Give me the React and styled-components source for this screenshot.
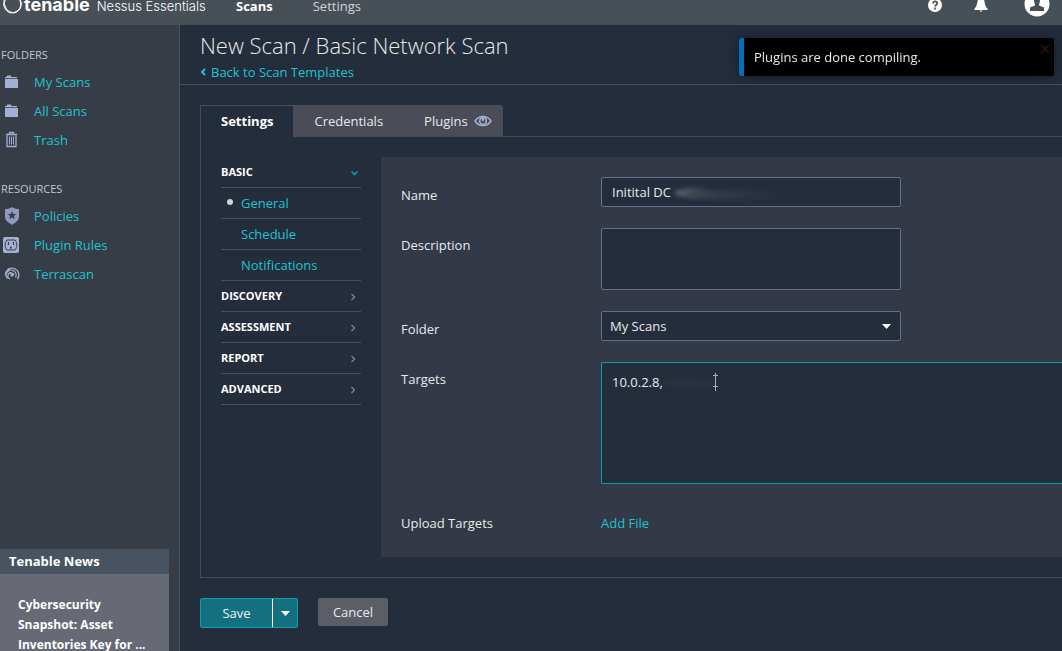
import React from "react";
import styled, { createGlobalStyle } from "styled-components";

const GlobalStyle = createGlobalStyle`
  * {
    box-sizing: border-box;
  }
  body {
    margin: 0;
    background: #242d3c;
    color: #e8e9eb;
    font-family: "Open Sans", "Noto Sans", sans-serif;
    font-size: 13px;
    line-height: 20px;
  }
  button, input, textarea, select {
    font: inherit;
    color: inherit;
  }
  a {
    color: #1fc3d0;
    text-decoration: none;
  }
`;

const Page = styled.div`
  height: 100vh;
  display: flex;
  flex-direction: column;
  overflow: hidden;
`;

const TopBar = styled.header`
  display: flex;
  align-items: flex-start;
  flex: none;
  height: 25px;
  background: #474f57;
  overflow: hidden;
`;

const Brand = styled.div`
  display: flex;
  flex: none;
  width: 236px;
  height: 15px;
  align-items: flex-end;
  padding-left: 2px;
  white-space: nowrap;
  color: #fff;
`;

const BrandName = styled.span`
  font: 700 18px/20px Inter, sans-serif;
`;

const BrandProduct = styled.span`
  margin-left: 7px;
  font: 300 13px/18px Inter, sans-serif;
`;

const MainNav = styled.nav`
  display: flex;
  flex: 1;
  gap: 40px;
  margin-top: -4px;
`;

const NavLink = styled.a`
  color: ${(props) => (props.$active ? "#fff" : "#d3d5d8")};
  font-weight: ${(props) => (props.$active ? 700 : 400)};
`;

const TopIcons = styled.div`
  display: flex;
  gap: 30px;
  padding-right: 12px;
`;

const IconButton = styled.button`
  display: flex;
  padding: 0;
  border: 0;
  background: none;
  color: #fff;
  &:last-child {
    margin-left: 5px;
  }
`;

const Body = styled.div`
  display: flex;
  flex: 1;
  min-height: 0;
`;

const Sidebar = styled.aside`
  display: flex;
  flex-direction: column;
  flex: none;
  width: 180px;
  padding-top: 20px;
  background: #373d46;
  border-right: 1px solid #4a505a;
`;

const SideTitle = styled.h2`
  margin: 0 0 2px;
  padding-left: 1px;
  font-size: 11px;
  font-weight: 400;
  line-height: 20px;
  color: #c3c5c8;
`;

const SideList = styled.ul`
  margin: 0 0 25px;
  padding: 0;
  list-style: none;
`;

const SideItem = styled.li`
  a {
    display: flex;
    align-items: center;
    height: 29px;
  }
  svg {
    flex: none;
    width: 18px;
    height: 20px;
    margin: 0 13px 0 3px;
  }
`;

const News = styled.section`
  width: 169px;
  height: 102px;
  margin-top: auto;
  overflow: hidden;
  background: #676a75;
  color: #fff;
`;

const NewsTitle = styled.h2`
  margin: 0;
  padding: 0 9px;
  background: #475361;
  font-size: 13px;
  line-height: 25px;
`;

const NewsLink = styled.a`
  display: block;
  width: 154px;
  padding: 21px 0 0 18px;
  color: #fff;
  font-size: 12px;
  font-weight: 700;
`;

const Main = styled.main`
  flex: 1;
  min-width: 0;
`;

const PageHeader = styled.div`
  height: 60px;
  padding: 6px 20px 0;
  border-bottom: 1px solid #454c59;
`;

const Title = styled.h1`
  margin: 0 0 2px;
  font-size: 22px;
  font-weight: 300;
  line-height: 29px;
`;

const BackLink = styled.a`
  display: flex;
  align-items: center;
  gap: 4px;
`;

const Content = styled.div`
  padding: 20px 0 0 20px;
`;

const Tabs = styled.div`
  display: flex;
`;

const Tab = styled.button`
  display: flex;
  align-items: center;
  gap: 6px;
  height: 32px;
  padding: ${(props) => (props.$last ? "0 11px 1px 20px" : "0 20px 1px")};
  border: 1px solid ${(props) => (props.$active ? "#454c59" : "#4a4d57")};
  border-width: 1px 0 0 1px;
  border-radius: ${(props) => (props.$last ? "0 3px 0 0" : "0")};
  background: ${(props) => (props.$active ? "#242d3c" : "#4a4d57")};
  color: ${(props) => (props.$active ? "#fff" : "#e8e9eb")};
  font-weight: ${(props) => (props.$active ? 700 : 400)};
`;

const TabPanel = styled.div`
  display: flex;
  padding: 20px 0;
  border: 1px solid #454c59;
  border-top: 0;
  border-right: 0;
`;

const TabRule = styled.div`
  flex: 1;
  border-bottom: 1px solid #454c59;
`;

const SectionNav = styled.nav`
  flex: none;
  width: 140px;
  margin: 0 20px;
`;

const SectionButton = styled.button`
  display: flex;
  align-items: center;
  justify-content: space-between;
  width: 100%;
  height: 31px;
  padding: 0 2px 0 0;
  border: 0;
  border-bottom: 1px solid #4a505a;
  background: none;
  color: #fff;
  font-size: 11px;
  font-weight: 700;
`;

const SectionLink = styled.a`
  display: flex;
  align-items: center;
  height: 31px;
  padding-left: ${(props) => (props.$active ? "6px" : "20px")};
  border-bottom: 1px solid #4a505a;
`;

const Dot = styled.span`
  width: 6px;
  height: 6px;
  margin: 0 8px 2px 0;
  border-radius: 50%;
  background: #d0d2d5;
`;

const Form = styled.form`
  flex: 1;
  min-width: 0;
  padding: 20px 0 1px 20px;
  background: #333947;
`;

const Field = styled.div`
  display: grid;
  grid-template-columns: 200px 1fr;
  align-items: start;
  min-height: 30px;
  margin-bottom: 21px;
`;

const Label = styled.label`
  padding-top: ${(props) => (props.$area ? "7px" : "8px")};
`;

const Input = styled.input`
  width: 300px;
  height: 30px;
  padding: 0 10px;
  border: 1px solid #647089;
  border-radius: 2px;
  outline: 0;
  background: #242d3c;
`;

const TextArea = styled.textarea`
  display: block;
  width: ${(props) => (props.$wide ? "100%" : "300px")};
  height: ${(props) => (props.$wide ? "122px" : "62px")};
  padding: 9px 10px;
  border: 1px solid ${(props) => (props.$wide ? "#129aa6" : "#647089")};
  border-right-width: ${(props) => (props.$wide ? "0" : "1px")};
  border-radius: ${(props) => (props.$wide ? "2px 0 0 2px" : "2px")};
  outline: 0;
  background: #242d3c;
  resize: none;
`;

const FieldBox = styled.div`
  position: relative;
`;

const Smudge = styled.span`
  position: absolute;
  top: ${(props) => props.$top};
  left: ${(props) => props.$left};
  width: ${(props) => props.$width};
  height: 10px;
  border-radius: 50%;
  background: linear-gradient(90deg, ${(props) => props.$color}, transparent);
  filter: blur(2px);
`;

const TextCursor = styled.svg`
  position: absolute;
  top: 11px;
  left: 110px;
`;

const SelectBox = styled.div`
  display: grid;
  width: 300px;
  align-items: center;
  svg {
    grid-area: 1 / 1;
    justify-self: end;
    margin-right: 10px;
    pointer-events: none;
  }
`;

const Select = styled.select`
  grid-area: 1 / 1;
  height: 30px;
  padding: 0 8px;
  appearance: none;
  border: 1px solid #647089;
  border-radius: 2px;
  background: #242d3c;
`;

const Actions = styled.div`
  display: flex;
  gap: 20px;
  margin-top: 20px;
`;

const SaveGroup = styled.div`
  display: flex;
  height: 30px;
  border: 1px solid #0aa0ae;
  border-radius: 2px;
  background: #14707e;
`;

const SaveButton = styled.button`
  display: flex;
  align-items: center;
  justify-content: center;
  width: ${(props) => (props.$menu ? "25px" : "71px")};
  padding: 0;
  border: 0;
  border-left: ${(props) => (props.$menu ? "1px solid #fff" : "0")};
  background: none;
  color: #f0f2f4;
`;

const CancelButton = styled.button`
  width: 70px;
  height: 28px;
  padding: 0;
  border: 0;
  border-radius: 2px;
  background: #5b5e67;
`;

const Toast = styled.div`
  position: fixed;
  top: 38px;
  right: 8px;
  display: flex;
  justify-content: space-between;
  width: 315px;
  height: 38px;
  padding: 0 4px 0 10px;
  border-left: 5px solid #0071b9;
  border-radius: 3px;
  background: #000;
  box-shadow: 0 0 12px rgba(0, 0, 0, 0.4);
  line-height: 38px;
`;

const ToastClose = styled.button`
  display: flex;
  align-items: center;
  height: 22px;
  padding: 0;
  border: 0;
  background: none;
`;

const FolderIcon = () => (
  <svg viewBox="0 0 18 20" fill="#a3b0d6">
    <path d="M2 5h1.500l.7-1.500h3.600L8.500 5H14v1.300H2zM2 7h13v9H2z" />
  </svg>
);

const TrashIcon = () => (
  <svg viewBox="0 0 18 20" fill="none" stroke="#a3b0d6">
    <path d="M3 4.500h11M6.500 4V2.500h4V4M4 5.500v11h9v-11" strokeWidth="1.300" />
    <path d="M6.500 6.500v8M8.500 6.500v8M10.500 6.500v8" />
  </svg>
);

const ShieldIcon = () => (
  <svg viewBox="0 0 18 20">
    <path fill="#8e99bb" d="M9 1c2 1.500 4 2 7 2v8c0 4-4 5.500-7 8-3-2.500-7-4-7-8V3c3 0 5-.5 7-2z" />
    <path fill="#373d46" d="M9 5l1.200 2.900 3.200.2-2.500 2 .8 3.200L9 11.600l-2.700 1.700.8-3.200-2.500-2 3.200-.2z" />
  </svg>
);

const PluginIcon = () => (
  <svg viewBox="0 0 18 20">
    <rect x="0" y="2" width="16" height="16" rx="2" fill="#a3b0d6" />
    <path d="M4 5h8c2.500 3 2.500 7 0 10H4C1.500 12 1.500 8 4 5z" fill="none" stroke="#373d46" />
    <path d="M5.500 7v3M10.500 7v3" stroke="#373d46" strokeWidth="1.200" />
    <path d="M7 13.500v-1a1 1 0 0 1 2 0v1z" fill="#373d46" />
  </svg>
);

const TerraIcon = () => (
  <svg viewBox="0 0 18 20" fill="none" stroke="#a3b0d6" strokeWidth="1.300">
    <path d="M2.500 11.500a6.700 6.700 0 1 1 12 3.500M4.500 14.500a5 5 0 1 1 8-1M7 15a3.200 3.200 0 1 1 4-4M4 6.500l2-2" />
    <circle cx="9" cy="11" r="1" fill="#a3b0d6" />
  </svg>
);

const EyeIcon = () => (
  <svg width="18" height="12" viewBox="0 0 18 12" fill="none" stroke="#a3b0d6">
    <path d="M1 6c4-6 12-6 16 0-4 6-12 6-16 0z" strokeWidth="1.500" />
    <circle cx="9" cy="6" r="3.300" strokeWidth="1.500" />
    <path d="M9 3v3" strokeWidth="2" />
  </svg>
);

const Caret = () => (
  <svg width="9" height="5" viewBox="0 0 9 5" fill="#fff">
    <path d="M0 0h9L4.500 5z" />
  </svg>
);

const Chevron = ({ open }) => (
  <svg width="9" height="9" viewBox="0 0 9 9" fill="none" stroke={open ? "#18a9b6" : "#7785ad"} strokeWidth="1.300">
    <path d={open ? "M1.500 3.500l3 3 3-3" : "M1.500 2l3 3-3 3"} />
  </svg>
);

const folders = [
  { name: "My Scans", icon: <FolderIcon /> },
  { name: "All Scans", icon: <FolderIcon /> },
  { name: "Trash", icon: <TrashIcon /> },
];

const resources = [
  { name: "Policies", icon: <ShieldIcon /> },
  { name: "Plugin Rules", icon: <PluginIcon /> },
  { name: "Terrascan", icon: <TerraIcon /> },
];

const sections = ["DISCOVERY", "ASSESSMENT", "REPORT", "ADVANCED"];

const SideGroup = ({ title, items }) => (
  <>
    <SideTitle>{title}</SideTitle>
    <SideList>
      {items.map((item) => (
        <SideItem key={item.name}>
          <a href="#">
            {item.icon}
            {item.name}
          </a>
        </SideItem>
      ))}
    </SideList>
  </>
);

const App = () => (
  <Page>
    <GlobalStyle />
    <TopBar>
      <Brand>
        <svg width="22" height="20" viewBox="0 0 22 20" fill="none" stroke="#fff" strokeWidth="0.800">
          <path d="M5 1h10l5 7-3 7-6 3-6-3-3-7zM2 5l5-5 9 1 3 7-1 6-5 4-7-1-4-6z" />
          <path d="M1.500 9L4 3l7-3 7 4 1 8-4 5-7 1-5-4z" />
        </svg>
        <BrandName>tenable</BrandName>
        <BrandProduct>Nessus Essentials</BrandProduct>
      </Brand>
      <MainNav>
        <NavLink href="#" $active>Scans</NavLink>
        <NavLink href="#">Settings</NavLink>
      </MainNav>
      <TopIcons>
        <IconButton aria-label="Help">
          <svg width="16" height="14" viewBox="0 0 16 14">
            <circle cx="8" cy="5" r="7" fill="#fff" />
            <path d="M6 3.500c0-3 4.200-2.500 4.200 0C10.200 5 8 5 8 6.500M8 7.500v2" fill="none" stroke="#474f57" strokeWidth="1.700" />
          </svg>
        </IconButton>
        <IconButton aria-label="Notifications">
          <svg width="16" height="14" viewBox="0 0 16 14" fill="#fff">
            <path d="M5 0h6c1 2 .5 6 3.500 8.500V10h-13V8.500C4.500 6 4 2 5 0zM6.500 10.500h3L8 12z" />
          </svg>
        </IconButton>
        <IconButton aria-label="Account">
          <svg width="26" height="18" viewBox="0 0 26 18">
            <circle cx="13" cy="4" r="12.500" fill="#fff" />
            <path d="M10 0h6c0 3-1 3-1 5.500l5 2V11H6V7.500l5-2C11 3 10 3 10 0z" fill="#474f57" />
          </svg>
        </IconButton>
      </TopIcons>
    </TopBar>
    <Body>
      <Sidebar>
        <SideGroup title="FOLDERS" items={folders} />
        <SideGroup title="RESOURCES" items={resources} />
        <News>
          <NewsTitle>Tenable News</NewsTitle>
          <NewsLink href="#">Cybersecurity Snapshot: Asset Inventories Key for ...</NewsLink>
        </News>
      </Sidebar>
      <Main>
        <PageHeader>
          <Title>New Scan / Basic Network Scan</Title>
          <BackLink href="#">
            <svg width="7" height="8" viewBox="0 0 7 8" fill="none" stroke="#1fc3d0" strokeWidth="2">
              <path d="M5 1L2 4l3 3" />
            </svg>
            Back to Scan Templates
          </BackLink>
        </PageHeader>
        <Content>
          <Tabs>
            <Tab $active>Settings</Tab>
            <Tab>Credentials</Tab>
            <Tab $last>
              Plugins <EyeIcon />
            </Tab>
            <TabRule />
          </Tabs>
          <TabPanel>
            <SectionNav>
              <SectionButton>
                BASIC <Chevron open />
              </SectionButton>
              <SectionLink href="#" $active>
                <Dot />
                General
              </SectionLink>
              <SectionLink href="#">Schedule</SectionLink>
              <SectionLink href="#">Notifications</SectionLink>
              {sections.map((name) => (
                <SectionButton key={name}>
                  {name} <Chevron />
                </SectionButton>
              ))}
            </SectionNav>
            <Form>
              <Field>
                <Label htmlFor="name">Name</Label>
                <FieldBox>
                  <Input id="name" defaultValue="Initital DC" />
                  <Smudge $top="11px" $left="74px" $width="42px" $color="#5d6871" />
                  <Smudge $top="13px" $left="84px" $width="100px" $color="#39434e" />
                </FieldBox>
              </Field>
              <Field>
                <Label htmlFor="description" $area>Description</Label>
                <TextArea id="description" />
              </Field>
              <Field>
                <Label htmlFor="folder">Folder</Label>
                <SelectBox>
                  <Select id="folder">
                    <option>My Scans</option>
                  </Select>
                  <Caret />
                </SelectBox>
              </Field>
              <Field>
                <Label htmlFor="targets" $area>Targets</Label>
                <FieldBox>
                  <TextArea id="targets" $wide defaultValue="10.0.2.8," />
                  <Smudge $top="16px" $left="62px" $width="80px" $color="#30333f" />
                  <TextCursor width="8" height="18" viewBox="0 0 8 18" stroke="#aab0c8">
                    <path d="M4.500 0v18M2 2.500h5M2 13.500h5" />
                  </TextCursor>
                </FieldBox>
              </Field>
              <Field>
                <Label as="span">Upload Targets</Label>
                <Label as="a" href="#">Add File</Label>
              </Field>
            </Form>
          </TabPanel>
          <Actions>
            <SaveGroup>
              <SaveButton>Save</SaveButton>
              <SaveButton $menu aria-label="More save options">
                <Caret />
              </SaveButton>
            </SaveGroup>
            <CancelButton>Cancel</CancelButton>
          </Actions>
        </Content>
      </Main>
    </Body>
    <Toast role="status">
      Plugins are done compiling.
      <ToastClose aria-label="Close">
        <svg width="10" height="10" viewBox="0 0 10 10" stroke="#2c1212" strokeWidth="1.700">
          <path d="M1 1l8 8M9 1L1 9" />
        </svg>
      </ToastClose>
    </Toast>
  </Page>
);

export default App;
